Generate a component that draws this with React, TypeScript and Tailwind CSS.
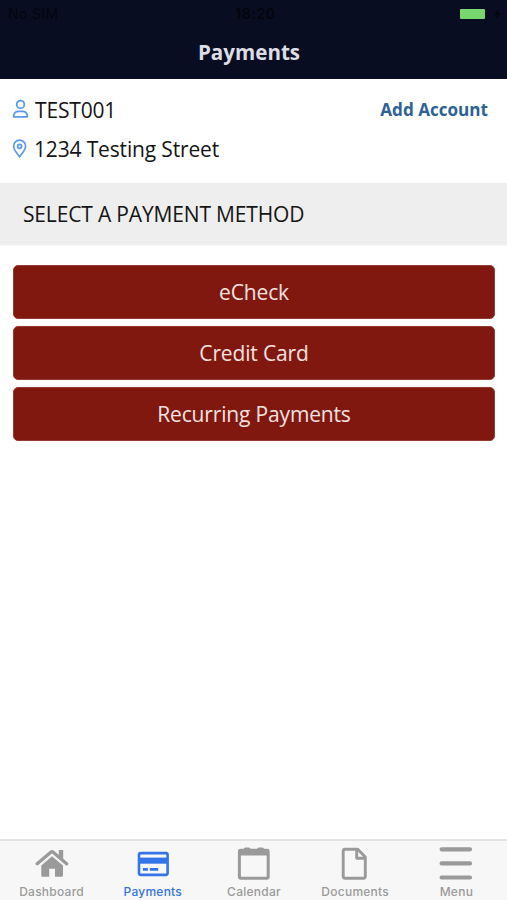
import type { ReactNode } from 'react';

const methods = ['eCheck', 'Credit Card', 'Recurring Payments'];

function HomeIcon() {
  return (
    <svg width="34" height="36" viewBox="0 0 34 36" fill="currentColor">
      <path d="M17 12.2 28 21.4V31.4q0 1.3-1.3 1.3H20v-7.9h-5.8v7.9H7.6q-1.3 0-1.3-1.3V21.4Z" />
      <path d="M2.2 19.8 15.8 8.2q1.2-1 2.4 0L31.6 19.8" fill="none" stroke="currentColor" strokeWidth="3.3" strokeLinecap="round" />
      <path d="M23.8 6h4.4v9.5l-4.4-4Z" />
    </svg>
  );
}

function CardIcon() {
  return (
    <svg width="34" height="36" viewBox="0 0 34 36" fill="none">
      <rect x="3" y="9.1" width="28.6" height="21.8" rx="1.8" stroke="currentColor" strokeWidth="2.6" />
      <path d="M2.5 13.6h29v6.1h-29Z" fill="currentColor" />
      <path d="M6.9 25.3h5M13.8 25.3h8.4" stroke="currentColor" strokeWidth="2.7" />
    </svg>
  );
}

function CalendarIcon() {
  return (
    <svg width="34" height="36" viewBox="0 0 34 36" fill="none">
      <rect x="2.4" y="6.2" width="28.8" height="28" rx="1.5" stroke="currentColor" strokeWidth="3" />
      <path d="M1.6 5.6h30.4v5.9H1.6Z" fill="currentColor" />
      <path d="M8.4 4.9h3.6M21.8 4.9h3.6" stroke="currentColor" strokeWidth="3" strokeLinecap="round" />
    </svg>
  );
}

function DocumentIcon() {
  return (
    <svg width="34" height="36" viewBox="0 0 34 36" fill="none" stroke="currentColor" strokeWidth="2.9" strokeLinejoin="round">
      <path d="M7.2 5.2h12.6l7.5 7.8v19.2q0 2-2 2H7.2q-2 0-2-2V7.2q0-2 2-2Z" />
      <path d="M18.7 6v8.2h8" />
    </svg>
  );
}

function MenuIcon() {
  return (
    <svg width="34" height="36" viewBox="0 0 34 36" stroke="currentColor" strokeWidth="4.2" strokeLinecap="round">
      <path d="M2.6 5.3h28.4M2.6 19.4h28.4M2.6 33.5h28.4" />
    </svg>
  );
}

const tabs: { label: string; icon: ReactNode; active?: boolean }[] = [
  { label: 'Dashboard', icon: <HomeIcon /> },
  { label: 'Payments', icon: <CardIcon />, active: true },
  { label: 'Calendar', icon: <CalendarIcon /> },
  { label: 'Documents', icon: <DocumentIcon /> },
  { label: 'Menu', icon: <MenuIcon /> },
];

export default function App() {
  return (
    <div className="flex h-[900px] w-[507px] flex-col overflow-hidden bg-white font-['Open_Sans',sans-serif] text-[#151515]">
      <header className="h-[79px] shrink-0 bg-[#090d22]">
        <div className="grid h-[27px] grid-cols-3 items-center pr-[6px] pl-[8px] font-['Inter',sans-serif] text-[14px] text-[#03050c]">
          <span className="tracking-[0.4px]">No SIM</span>
          <span className="pl-[2px] text-center font-semibold tracking-[0.6px]">18:20</span>
          <span className="flex items-center justify-end gap-[9px]">
            <span className="h-[10px] w-[25px] rounded-[1px] bg-[#78d66f]" />
            <svg width="7" height="12" viewBox="0 0 7 12" fill="currentColor">
              <path d="M4.5 1 0 7h3L2.3 11 7 5H4Z" />
            </svg>
          </span>
        </div>
        <h1 className="flex h-[51px] items-center justify-center pr-[9px] text-[20.6px] font-bold text-[#dcdee6]">Payments</h1>
      </header>
      <section className="h-[104px] shrink-0 pt-[11px] pr-[19px] pl-[12px]">
        <div className="flex h-[39px] items-center">
          <svg className="mb-[1px] text-[#5b99ee]" width="18" height="20" viewBox="0 0 18 20" fill="none" stroke="currentColor" strokeWidth="1.8">
            <circle cx="8.5" cy="5.4" r="3.8" />
            <path d="M2.1 17.8q-.6 0-.5-.7c.3-3.3 2.6-4.8 5-4.8h3.8c2.5 0 4.7 1.5 5 4.8q.1.7-.5.7Z" />
          </svg>
          <span className="ml-[5px] pt-[2px] text-[21px] tracking-[-0.16px]">TEST001</span>
          <a className="ml-auto text-[17.1px] font-bold text-[#2d6296]">Add Account</a>
        </div>
        <div className="flex h-[40px] items-center">
          <svg className="text-[#5b99ee]" width="16" height="20" viewBox="0 0 16 20" fill="none" stroke="currentColor" strokeWidth="1.7">
            <path d="M7.6 17.7C5.6 15 1.6 10.8 1.6 7.2a6 6 0 0 1 12 0C13.6 10.8 9.6 15 7.6 17.7Z" />
            <circle cx="7.6" cy="7.3" r="2" />
          </svg>
          <span className="ml-[6px] pt-[2px] text-[21px] tracking-[-0.16px]">1234 Testing Street</span>
        </div>
      </section>
      <h2 className="flex h-[62px] shrink-0 items-center bg-[#eeeeee] pt-[2px] pl-[23px] text-[21px] tracking-[-0.16px]">SELECT A PAYMENT METHOD</h2>
      <main className="flex flex-1 flex-col gap-[7px] pt-[20px] pr-[12px] pl-[13px]">
        {methods.map((m) => (
          <button key={m} className="h-[54px] shrink-0 rounded-[5px] border border-[#963b32] bg-[#81180f] pt-[2px] text-[21px] tracking-[-0.16px] text-[#f7e3e0]">
            {m}
          </button>
        ))}
      </main>
      <nav className="grid h-[61px] shrink-0 grid-cols-5 border-t-2 border-[#e3e3e3] bg-[#f7f7f7] pt-[3px] pl-[1px]">
        {tabs.map((t) => (
          <div key={t.label} className={t.active ? 'flex flex-col items-center text-[#3474e8]' : 'flex flex-col items-center text-[#9a9a9a]'}>
            <div className="h-[39px]">{t.icon}</div>
            <span className="font-['Inter',sans-serif] text-[12px] leading-[17px] font-medium tracking-[0.25px]">{t.label}</span>
          </div>
        ))}
      </nav>
    </div>
  );
}
